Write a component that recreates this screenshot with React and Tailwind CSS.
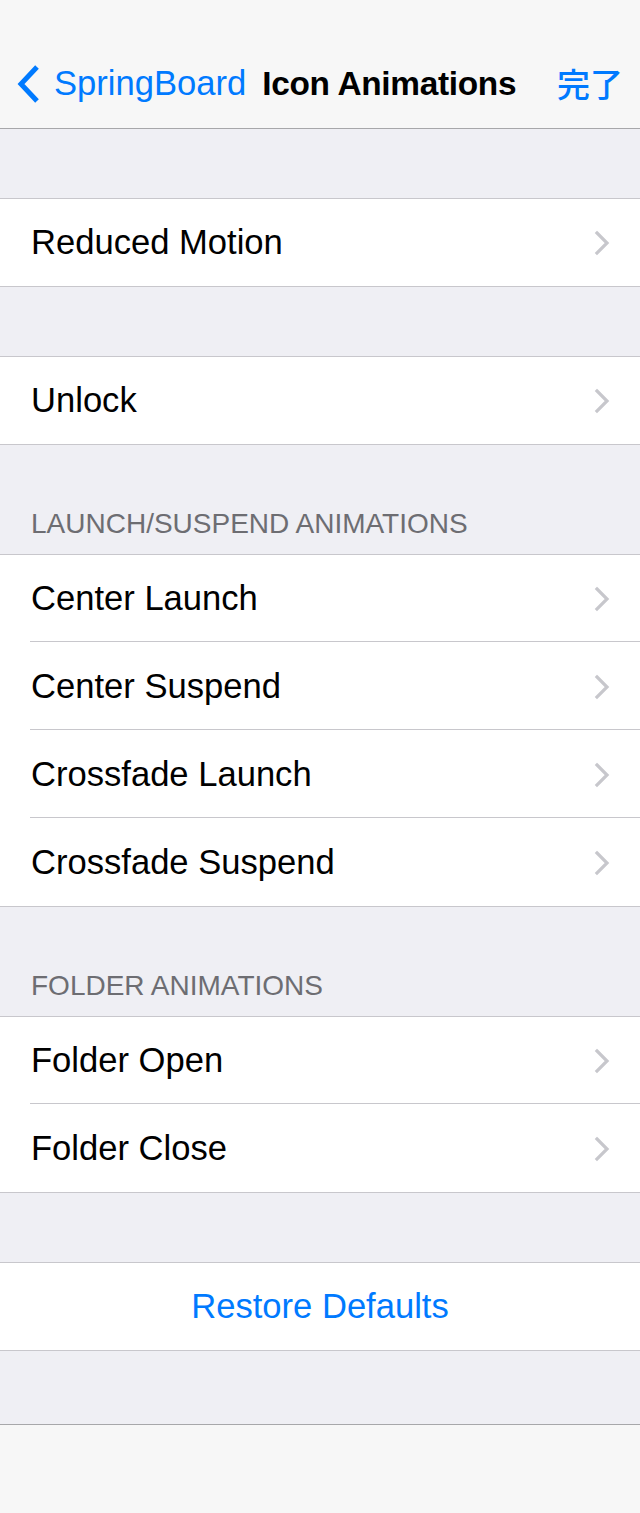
import React from 'react';

const font = { fontFamily: '"Liberation Sans", Arial, "Noto Sans CJK JP", sans-serif' };

const Chevron = () => (
  <svg width="16" height="26" viewBox="0 0 16 26" className="shrink-0">
    <path d="M3 3 L13 13 L3 23" fill="none" stroke="#c7c7cc" strokeWidth="3.2" strokeLinecap="square" />
  </svg>
);

const Row = ({ label, last }) => (
  <div className="h-[87px] flex items-center pl-[31px] pr-[30px] relative">
    <span className="flex-1 text-[34.6px] text-black">{label}</span>
    <Chevron />
    {!last && <div className="absolute left-[30px] right-0 bottom-0 h-px bg-[#c8c7cc]" />}
  </div>
);

const Group = ({ rows }) => (
  <div className="bg-white border-y border-[#c8c7cc]">
    {rows.map((r, i) => (
      <div key={r} className={i > 0 ? 'pt-px' : ''}>
        <Row label={r} last={i === rows.length - 1} />
      </div>
    ))}
  </div>
);

const Header = ({ title }) => (
  <div className="h-[109px] flex items-end pl-[31px] pb-[16px]">
    <span className="text-[28px] text-[#6d6d72] leading-none">{title}</span>
  </div>
);

export default function App() {
  return (
    <div className="w-[640px] h-[1513px] bg-[#efeff4] flex flex-col overflow-hidden" style={font}>
      {/* nav bar */}
      <div className="h-[129px] bg-[#f7f7f7] border-b border-[#a7a7aa] pt-[40px] flex items-center shrink-0">
        <svg width="26" height="40" viewBox="0 0 26 40" className="ml-[16px] shrink-0">
          <path d="M21 3 L5 20 L21 37" fill="none" stroke="#007aff" strokeWidth="5" strokeLinejoin="miter" />
        </svg>
        <span className="ml-[12px] text-[34.6px] text-[#007aff]">SpringBoard</span>
        <span className="ml-[16px] text-[33.4px] font-bold text-black tracking-[-0.3px]">Icon Animations</span>
        <span className="ml-auto mr-[17px] text-[33px] font-medium text-[#007aff]" style={{ fontFamily: '"Noto Sans CJK JP", sans-serif' }}>完了</span>
      </div>

      <div className="h-[69px] shrink-0" />
      <Group rows={['Reduced Motion']} />
      <div className="h-[69px] shrink-0" />
      <Group rows={['Unlock']} />
      <Header title="LAUNCH/SUSPEND ANIMATIONS" />
      <Group rows={['Center Launch', 'Center Suspend', 'Crossfade Launch', 'Crossfade Suspend']} />
      <Header title="FOLDER ANIMATIONS" />
      <Group rows={['Folder Open', 'Folder Close']} />
      <div className="h-[69px] shrink-0" />
      <div className="bg-white border-y border-[#c8c7cc] h-[89px] flex items-center justify-center shrink-0">
        <span className="text-[34.6px] text-[#007aff]">Restore Defaults</span>
      </div>
      <div className="h-[73px] shrink-0" />
      {/* bottom toolbar */}
      <div className="flex-1 bg-[#f7f7f7] border-t border-[#a7a7aa]" />
    </div>
  );
}
